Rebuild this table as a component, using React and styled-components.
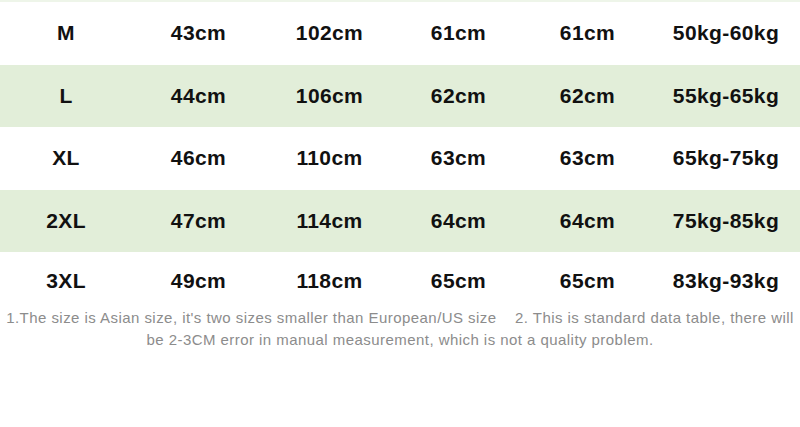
import React from 'react';
import styled, { createGlobalStyle } from 'styled-components';

const rows = [
  ['M', '43cm', '102cm', '61cm', '61cm', '50kg-60kg'],
  ['L', '44cm', '106cm', '62cm', '62cm', '55kg-65kg'],
  ['XL', '46cm', '110cm', '63cm', '63cm', '65kg-75kg'],
  ['2XL', '47cm', '114cm', '64cm', '64cm', '75kg-85kg'],
  ['3XL', '49cm', '118cm', '65cm', '65cm', '83kg-93kg'],
];

function App() {
  return (
    <>
      <GlobalStyle />
      <Page>
        <Table>
          {rows.map((row, i) => (
            <Row key={row[0]} $shaded={i % 2 === 1} $last={i === rows.length - 1}>
              {row.map((cell, j) => (
                <Cell key={j}>{cell}</Cell>
              ))}
            </Row>
          ))}
        </Table>
        <Note>
          1.The size is Asian size, it's two sizes smaller than European/US size&nbsp;&nbsp;&nbsp; 2. This is standard data table, there will be 2-3CM error in manual measurement, which is not a quality problem.
        </Note>
      </Page>
    </>
  );
}

const GlobalStyle = createGlobalStyle`
  html, body {
    margin: 0;
    background: #fff;
  }
`;

const Page = styled.div`
  width: 800px;
  height: 427px;
  overflow: hidden;
  background: #fff;
  font-family: "Liberation Sans", Arial, sans-serif;
`;

const Table = styled.div`
  border-top: 2px solid #eef5e9;
`;

const Row = styled.div`
  display: grid;
  grid-template-columns: 132px 133px 129px 129px 129px 148px;
  align-items: center;
  box-sizing: border-box;
  height: ${p => (p.$last ? '55px' : '62.5px')};
  padding-top: ${p => (p.$last ? '3px' : '0')};
  background: ${p => (p.$shaded ? '#e2eed9' : '#fff')};
`;

const Cell = styled.div`
  text-align: center;
  font-size: 21px;
  font-weight: 700;
  letter-spacing: 0.4px;
  color: #111;
`;

const Note = styled.p`
  margin: 0;
  padding: 0 2px;
  text-align: center;
  font-size: 15px;
  letter-spacing: 0.45px;
  line-height: 22px;
  color: #8c8c8c;
`;

export default App;
